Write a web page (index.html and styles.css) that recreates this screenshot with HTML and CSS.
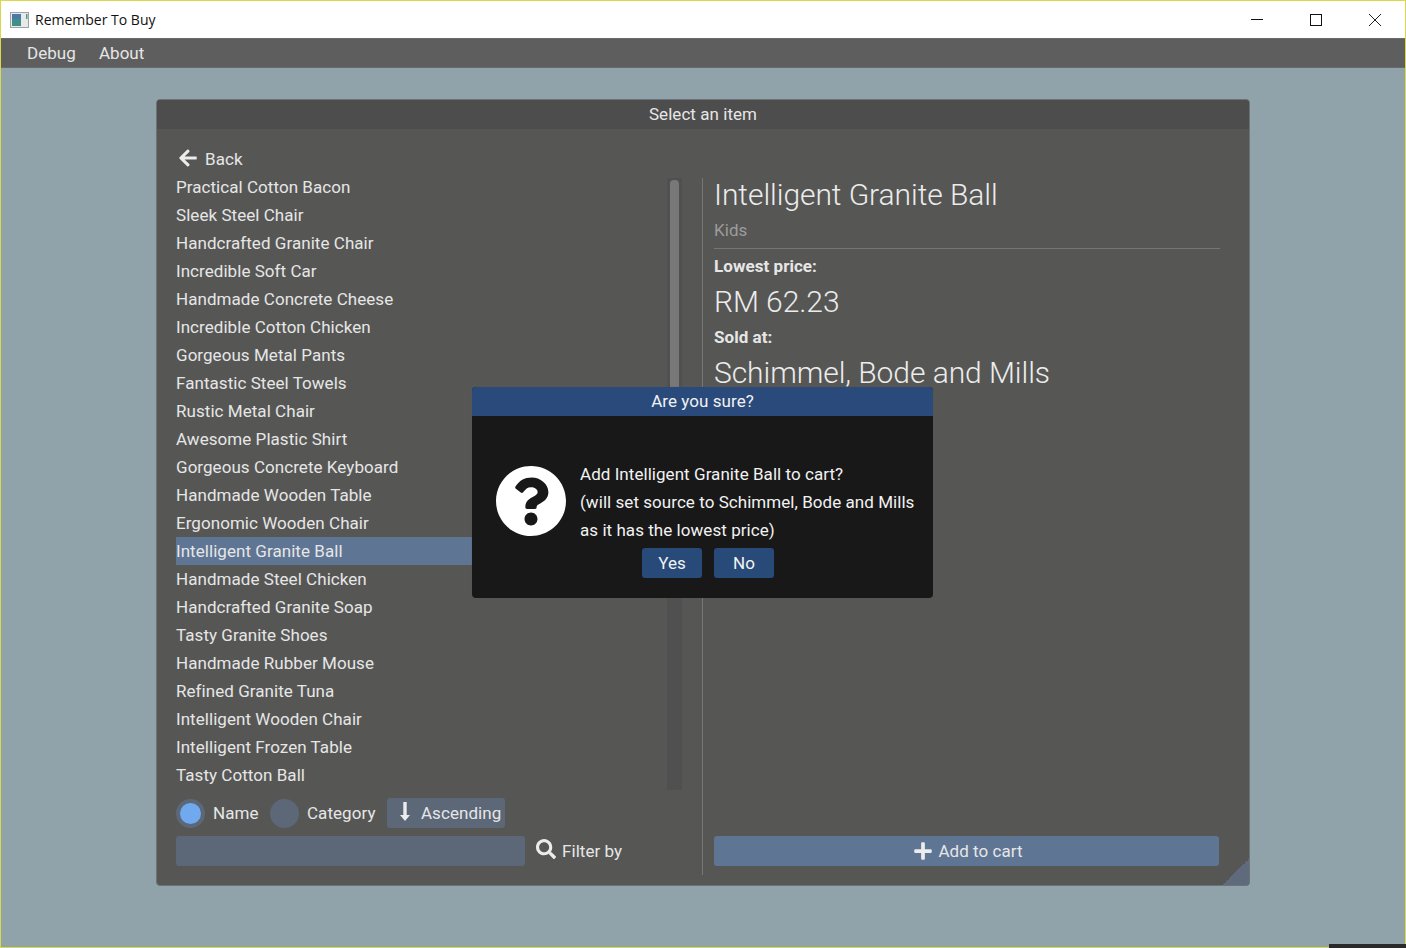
FILE: index.html
```html
<!DOCTYPE html>
<html lang="en">
<head>
  <meta charset="UTF-8">
  <title>Remember To Buy</title>
  <link rel="stylesheet" href="styles.css">
</head>
<body>
  <div class="window">
    <div class="titlebar">
      <svg class="app-icon" width="20" height="16" viewBox="0 0 20 16">
        <rect x="0.5" y="0.5" width="18" height="15" fill="#e8eaea" stroke="#a0a0a6"/>
        <rect x="2" y="2" width="9" height="12" fill="#3f8f86"/>
        <rect x="2" y="2" width="9" height="5" fill="#4a78a8"/>
        <rect x="16" y="2" width="1.500" height="5" fill="#4a9a8a"/>
      </svg>
      <span class="app-title">Remember To Buy</span>
      <div class="win-controls">
        <svg width="14" height="14" viewBox="0 0 14 14"><path d="M1 6.500h12" stroke="#111" fill="none"/></svg>
        <svg width="14" height="14" viewBox="0 0 14 14"><rect x="1.500" y="1.500" width="11" height="11" stroke="#111" fill="none"/></svg>
        <svg width="14" height="14" viewBox="0 0 14 14"><path d="M1 1l12 12M13 1L1 13" stroke="#222" fill="none"/></svg>
      </div>
    </div>

    <nav class="menubar">
      <span>Debug</span>
      <span>About</span>
    </nav>

    <main class="desktop">
      <section class="panel">
        <div class="panel-title">Select an item</div>
        <div class="panel-body">

          <div class="left-col">
            <div class="back-row">
              <svg class="icon back-icon" width="18" height="20" viewBox="0 0 448 512"><path d="M257.5 445.1l-22.2 22.2c-9.4 9.4-24.6 9.4-33.9 0L7 273c-9.4-9.4-9.4-24.6 0-33.9L201.4 44.7c9.4-9.4 24.6-9.4 33.9 0l22.2 22.2c9.5 9.5 9.3 25-.4 34.3L136.6 216H424c13.3 0 24 10.7 24 24v32c0 13.3-10.7 24-24 24H136.6l120.5 114.8c9.8 9.3 10 24.8.4 34.3z"/></svg>
              <span>Back</span>
            </div>

            <div class="list-wrap">
              <ul class="item-list">
                <li>Practical Cotton Bacon</li>
                <li>Sleek Steel Chair</li>
                <li>Handcrafted Granite Chair</li>
                <li>Incredible Soft Car</li>
                <li>Handmade Concrete Cheese</li>
                <li>Incredible Cotton Chicken</li>
                <li>Gorgeous Metal Pants</li>
                <li>Fantastic Steel Towels</li>
                <li>Rustic Metal Chair</li>
                <li>Awesome Plastic Shirt</li>
                <li>Gorgeous Concrete Keyboard</li>
                <li>Handmade Wooden Table</li>
                <li>Ergonomic Wooden Chair</li>
                <li class="selected">Intelligent Granite Ball</li>
                <li>Handmade Steel Chicken</li>
                <li>Handcrafted Granite Soap</li>
                <li>Tasty Granite Shoes</li>
                <li>Handmade Rubber Mouse</li>
                <li>Refined Granite Tuna</li>
                <li>Intelligent Wooden Chair</li>
                <li>Intelligent Frozen Table</li>
                <li>Tasty Cotton Ball</li>
              </ul>
              <div class="scrollbar"><div class="thumb"></div></div>
            </div>

            <div class="sort-row">
              <span class="radio checked"></span>
              <span class="radio-label">Name</span>
              <span class="radio"></span>
              <span class="radio-label">Category</span>
              <button class="sort-btn">
                <svg class="icon sort-icon" width="12" height="19" viewBox="0 0 12 19"><path d="M4.300 0h3.400v13h3.300L6 19 1 13h3.300z"/></svg>
                <span>Ascending</span>
              </button>
            </div>

            <div class="filter-row">
              <div class="filter-input"></div>
              <svg class="icon search-icon" width="20" height="20" viewBox="0 0 512 512"><path d="M505 442.7L405.3 343c-4.5-4.5-10.6-7-17-7H372c27.6-35.3 44-79.7 44-128C416 93.1 322.9 0 208 0S0 93.1 0 208s93.1 208 208 208c48.3 0 92.7-16.4 128-44v16.3c0 6.4 2.5 12.5 7 17l99.7 99.7c9.4 9.4 24.6 9.4 33.9 0l28.3-28.3c9.4-9.4 9.4-24.6.1-34zM208 336c-70.7 0-128-57.2-128-128 0-70.7 57.2-128 128-128 70.7 0 128 57.2 128 128 0 70.7-57.2 128-128 128z"/></svg>
              <span>Filter by</span>
            </div>
          </div>

          <div class="right-col">
            <h1 class="big title">Intelligent Granite Ball</h1>
            <div class="category">Kids</div>
            <hr class="rule">
            <div class="label">Lowest price:</div>
            <div class="big price">RM 62.23</div>
            <div class="label sold">Sold at:</div>
            <div class="big shop">Schimmel, Bode and Mills</div>
            <button class="add-btn">
              <svg class="icon" width="18" height="20" viewBox="0 0 448 512"><path d="M416 208H272V64c0-17.670-14.330-32-32-32h-32c-17.670 0-32 14.330-32 32v144H32c-17.670 0-32 14.330-32 32v32c0 17.670 14.330 32 32 32h144v144c0 17.670 14.330 32 32 32h32c17.670 0 32-14.330 32-32V304h144c17.670 0 32-14.330 32-32v-32c0-17.670-14.330-32-32-32z"/></svg>
              <span>Add to cart</span>
            </button>
          </div>
        </div>
        <div class="grip"></div>
      </section>

      <!-- Modal over the panel -->
      <div class="dialog">
        <div class="dialog-title">Are you sure?</div>
        <div class="dialog-body">
          <svg class="dialog-icon" width="72" height="72" viewBox="8 8 496 496"><path d="M504 256c0 136.997-111.043 248-248 248S8 392.997 8 256C8 119.083 119.043 8 256 8s248 111.083 248 248zM262.655 90c-54.497 0-89.255 22.957-116.549 63.758-3.536 5.286-2.353 12.415 2.715 16.258l34.699 26.310c5.205 3.947 12.621 3.008 16.665-2.122 17.864-22.658 30.113-35.797 57.303-35.797 20.429 0 45.698 13.148 45.698 32.958 0 14.976-12.363 22.667-32.534 33.976C247.128 238.528 216 254.941 216 296v4c0 6.627 5.373 12 12 12h56c6.627 0 12-5.373 12-12v-1.333c0-28.462 83.186-29.647 83.186-106.667 0-58.002-60.165-102-116.531-102zM256 338c-25.365 0-46 20.635-46 46 0 25.364 20.635 46 46 46s46-20.636 46-46c0-25.365-20.635-46-46-46z"/></svg>
          <div class="dialog-text">
            <p>Add Intelligent Granite Ball to cart?</p>
            <p>(will set source to Schimmel, Bode and Mills</p>
            <p>as it has the lowest price)</p>
          </div>
        </div>
        <div class="dialog-buttons">
          <button class="dialog-btn">Yes</button>
          <button class="dialog-btn">No</button>
        </div>
      </div>
    </main>
  </div>
  <div class="taskbar-edge"></div>
</body>
</html>
```

FILE: styles.css
```css
* {
  box-sizing: border-box;
}

html, body {
  margin: 0;
  padding: 0;
  height: 948px;
  overflow: hidden;
}

body {
  font-family: Roboto, "Liberation Sans", sans-serif;
  font-size: 17px;
  letter-spacing: 0.05px;
  color: #e6e6e6;
}

button {
  font: inherit;
  letter-spacing: inherit;
  color: inherit;
  border: none;
  padding: 0;
  cursor: pointer;
}

.icon {
  fill: #ececec;
  flex: none;
}

.window {
  height: 948px;
  display: flex;
  flex-direction: column;
  border: 1px solid #dcd84c;
  background-color: #90a2aa;
}

.titlebar {
  height: 37px;
  flex: none;
  display: flex;
  align-items: center;
  padding-left: 9px;
  background-color: #fff;
  color: #111;
}

.app-title {
  margin-left: 5px;
  font-family: "Open Sans", sans-serif;
  font-size: 14px;
  letter-spacing: 0;
}

.win-controls {
  margin-left: auto;
  display: flex;
  gap: 45px;
  padding-right: 23px;
}

.menubar {
  height: 30px;
  flex: none;
  display: flex;
  align-items: center;
  gap: 23px;
  padding-left: 26px;
  background-color: #5e5e5e;
  border-top: 1px solid #6a6a6c;
  border-bottom: 1px solid #6a6a6c;
  line-height: 28px;
}

.desktop {
  position: relative;
  flex: 1;
  padding-top: 31px;
}

.panel {
  position: relative;
  width: 1094px;
  height: 787px;
  margin-left: 155px;
  background-color: #565755;
  border: 1px solid #6d7276;
  border-radius: 4px;
  overflow: hidden;
}

.panel-title {
  height: 29px;
  line-height: 29px;
  text-align: center;
  background-color: #4d4d4d;
}

.panel-body {
  display: flex;
  height: 757px;
  padding-left: 19px;
}

.left-col {
  width: 506px;
  flex: none;
  padding-top: 16px;
}

.back-row {
  height: 28px;
  display: flex;
  align-items: center;
  gap: 8px;
  padding-left: 3px;
}

.back-icon {
  margin-top: -2px;
}

.list-wrap {
  display: flex;
  height: 616px;
}

.item-list {
  list-style: none;
  margin: 0;
  padding: 0;
  width: 491px;
  flex: none;
}

.item-list li {
  height: 28px;
  line-height: 28px;
}

.item-list .selected {
  background-color: #5f7594;
}

.scrollbar {
  width: 15px;
  height: 612px;
  margin-top: 5px;
  padding: 2px 3px;
  background-color: #505050;
}

.thumb {
  height: 290px;
  background-color: #787878;
  border-radius: 4px;
}

.sort-row {
  height: 30px;
  margin-top: 9px;
  display: flex;
  align-items: center;
}

.radio {
  width: 29px;
  height: 29px;
  flex: none;
  border-radius: 50%;
  background-color: #5c6778;
}

.radio.checked {
  border: 4px solid #5c6778;
  background-color: #71a9ee;
}

.radio-label {
  margin: 0 11.5px 0 8px;
}

.sort-btn {
  width: 118px;
  height: 30px;
  display: flex;
  align-items: center;
  gap: 10px;
  padding-left: 12px;
  background-color: #5c6778;
  border-radius: 3px;
}

.sort-icon {
  margin-top: -3px;
}

.filter-row {
  height: 30px;
  margin-top: 8px;
  display: flex;
  align-items: center;
}

.filter-input {
  width: 349px;
  height: 30px;
  background-color: #5c6778;
  border-radius: 3px;
  margin-right: 11px;
}

.search-icon {
  margin-top: -5px;
}

.filter-row span {
  margin-left: 6px;
}

.right-col {
  width: 518px;
  flex: none;
  margin: 49px 0 11px 20px;
  padding: 0 11px 9px 11px;
  border-left: 1px solid #767676;
  display: flex;
  flex-direction: column;
}

.big {
  margin: 0;
  font-size: 30px;
  font-weight: 300;
  line-height: 36px;
  letter-spacing: -0.07px;
  color: #ececec;
}

.title {
  margin-top: -1px;
}

.category {
  margin-top: 5px;
  height: 24px;
  line-height: 24px;
  color: #9c9c9c;
}

.rule {
  width: 506px;
  margin: 6px 0 0 0;
  border: none;
  border-top: 1px solid #767676;
}

.label {
  font-weight: 700;
  height: 24px;
  line-height: 24px;
  margin-top: 5px;
}

.label.sold {
  margin-top: 1px;
}

.price {
  height: 46px;
  line-height: 48px;
}

.shop {
  height: 48px;
  line-height: 48px;
}

.add-btn {
  margin-top: auto;
  width: 505px;
  height: 30px;
  flex: none;
  display: flex;
  align-items: center;
  justify-content: center;
  gap: 6px;
  padding-left: 4px;
  background-color: #5f7594;
  border-radius: 3px;
}

.grip {
  position: absolute;
  right: 0;
  bottom: 0;
  width: 26px;
  height: 26px;
  background: linear-gradient(135deg, transparent 50%, #5f6b7c 50%);
}

.dialog {
  position: absolute;
  left: 471px;
  top: 319px;
  width: 461px;
  height: 211px;
  background-color: #181818;
  border-radius: 4px;
  overflow: hidden;
  box-shadow: 0 0 1px #555;
  color: #f2f2f2;
}

.dialog-title {
  height: 29px;
  line-height: 29px;
  text-align: center;
  background-color: #2a4a7c;
}

.dialog-body {
  display: flex;
  align-items: center;
  padding: 44px 0 0 23px;
}

.dialog-icon {
  fill: #fff;
  flex: none;
  width: 70px;
  height: 70px;
  margin-top: -2px;
  margin-left: 1px;
}

.dialog-text {
  margin-left: 14px;
}

.dialog-text p {
  margin: 0;
  height: 28px;
  line-height: 28px;
}

.dialog-buttons {
  display: flex;
  justify-content: center;
  gap: 12px;
  margin-top: 4px;
  padding-left: 11px;
}

.dialog-btn {
  width: 60px;
  height: 30px;
  background-color: #274a78;
  border-radius: 3px;
}

.taskbar-edge {
  position: absolute;
  right: 0;
  bottom: 0;
  width: 77px;
  height: 4px;
  background-color: #2a2a2a;
}
```
